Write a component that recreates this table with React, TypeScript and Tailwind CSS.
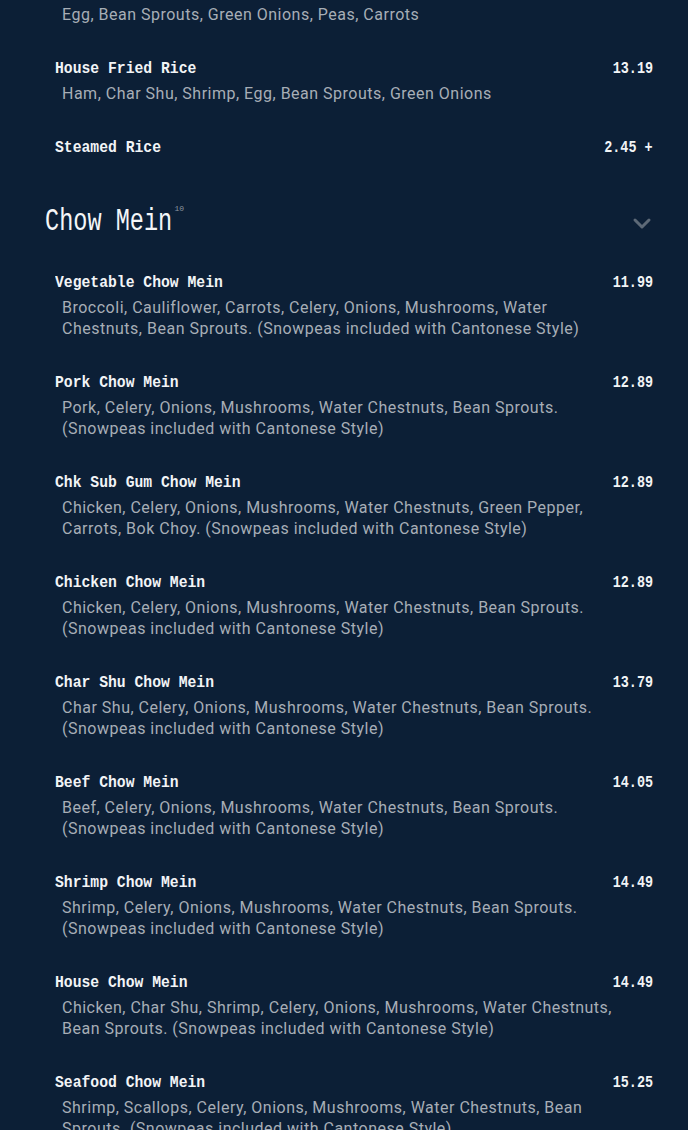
import React from "react";

type Item = { name: string; price: string; desc?: string };

const chowMein: Item[] = [
  { name: "Vegetable Chow Mein", price: "11.99", desc: "Broccoli, Cauliflower, Carrots, Celery, Onions, Mushrooms, Water Chestnuts, Bean Sprouts. (Snowpeas included with Cantonese Style)" },
  { name: "Pork Chow Mein", price: "12.89", desc: "Pork, Celery, Onions, Mushrooms, Water Chestnuts, Bean Sprouts. (Snowpeas included with Cantonese Style)" },
  { name: "Chk Sub Gum Chow Mein", price: "12.89", desc: "Chicken, Celery, Onions, Mushrooms, Water Chestnuts, Green Pepper, Carrots, Bok Choy. (Snowpeas included with Cantonese Style)" },
  { name: "Chicken Chow Mein", price: "12.89", desc: "Chicken, Celery, Onions, Mushrooms, Water Chestnuts, Bean Sprouts. (Snowpeas included with Cantonese Style)" },
  { name: "Char Shu Chow Mein", price: "13.79", desc: "Char Shu, Celery, Onions, Mushrooms, Water Chestnuts, Bean Sprouts. (Snowpeas included with Cantonese Style)" },
  { name: "Beef Chow Mein", price: "14.05", desc: "Beef, Celery, Onions, Mushrooms, Water Chestnuts, Bean Sprouts. (Snowpeas included with Cantonese Style)" },
  { name: "Shrimp Chow Mein", price: "14.49", desc: "Shrimp, Celery, Onions, Mushrooms, Water Chestnuts, Bean Sprouts. (Snowpeas included with Cantonese Style)" },
  { name: "House Chow Mein", price: "14.49", desc: "Chicken, Char Shu, Shrimp, Celery, Onions, Mushrooms, Water Chestnuts, Bean Sprouts. (Snowpeas included with Cantonese Style)" },
  { name: "Seafood Chow Mein", price: "15.25", desc: "Shrimp, Scallops, Celery, Onions, Mushrooms, Water Chestnuts, Bean Sprouts. (Snowpeas included with Cantonese Style)" },
];

const mono = "font-['Liberation_Mono',monospace]";
const sans = "font-['Roboto','Liberation_Sans',sans-serif]";

function Desc({ text }: { text: string }) {
  return (
    <p className={`${sans} pl-[7px] pr-[28px] text-[16px] leading-[21px] tracking-[0.5px] text-[#a7aeb6]`}>
      {text}
    </p>
  );
}

function Row({ item }: { item: Item }) {
  return (
    <div className="flex flex-col">
      <div className="flex items-center justify-between h-[20px]">
        <span className={`${mono} inline-block origin-left scale-x-[0.92] text-[16px] font-bold leading-[20px] text-[#f2f4f6] whitespace-nowrap`}>
          {item.name}
        </span>
        <span className={`${mono} inline-block origin-right scale-x-[0.84] text-[16px] font-bold leading-[20px] text-[#f2f4f6] whitespace-nowrap`}>
          {item.price}
        </span>
      </div>
      {item.desc && (
        <div className="mt-[4px]">
          <Desc text={item.desc} />
        </div>
      )}
    </div>
  );
}

export default function App() {
  return (
    <div className="min-h-[1130px] w-[688px] overflow-hidden bg-[#0c1f36]">
      <div className="pl-[55px] pr-[35px] pt-[3.5px]">
        <Desc text="Egg, Bean Sprouts, Green Onions, Peas, Carrots" />
        <div className="mt-[34px] flex flex-col gap-[34px]">
          <Row item={{ name: "House Fried Rice", price: "13.19", desc: "Ham, Char Shu, Shrimp, Egg, Bean Sprouts, Green Onions" }} />
          <Row item={{ name: "Steamed Rice", price: "2.45 +" }} />
        </div>
      </div>
      <div className="mt-[44px] flex h-[40px] items-center justify-between pl-[45px] pr-[36px]">
        <div className="flex items-start">
          <span className={`${mono} inline-block origin-left scale-x-[0.76] text-[31px] leading-[40px] text-[#f4f6f8] whitespace-nowrap`}>
            Chow Mein
          </span>
          <span className={`${mono} -ml-[38px] mt-[2px] text-[8px] leading-[10px] text-[#8a949f]`}>10</span>
        </div>
        <svg width="20" height="14" viewBox="0 0 20 14" className="mt-[4px]">
          <path d="M3 3 L10 10 L17 3" fill="none" stroke="#5d6977" strokeWidth="3" strokeLinecap="round" strokeLinejoin="round" />
        </svg>
      </div>
      <div className="mt-[31px] flex flex-col gap-[34px] pl-[55px] pr-[35px]">
        {chowMein.map((it) => (
          <Row key={it.name} item={it} />
        ))}
      </div>
    </div>
  );
}
